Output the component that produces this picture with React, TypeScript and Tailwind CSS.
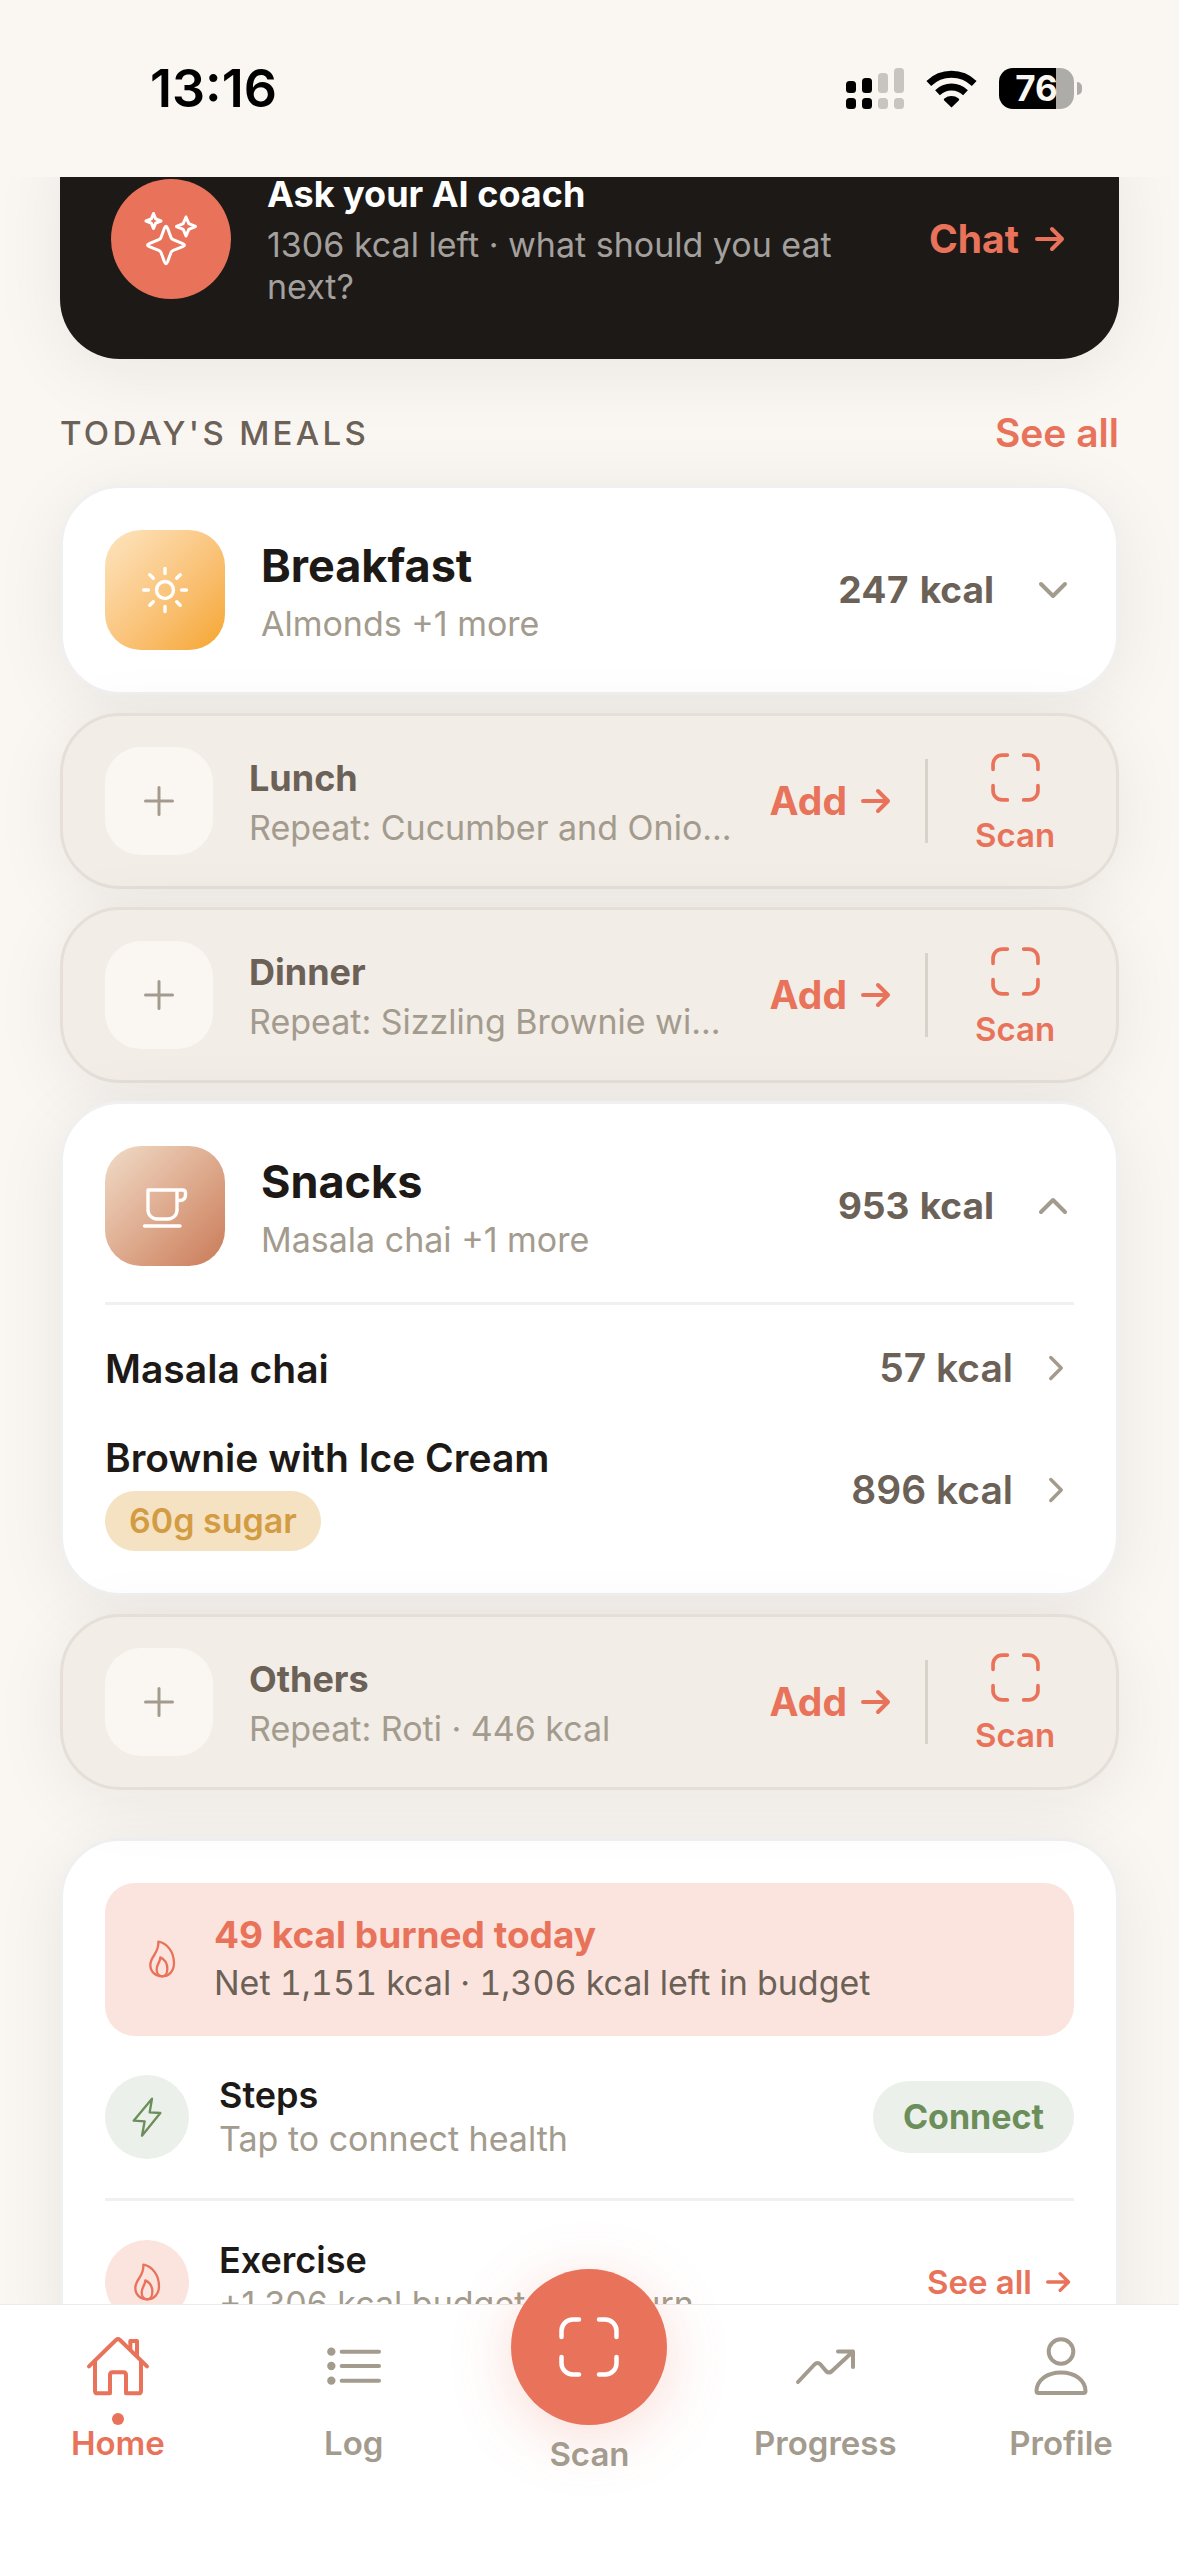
import type { ReactNode } from 'react';

type IconProps = { className?: string };

function Arrow({ className = '' }: IconProps) {
  return (
    <svg viewBox="0 0 30 26" className={className} fill="none" stroke="currentColor" strokeWidth="4" strokeLinecap="round" strokeLinejoin="round" aria-hidden="true">
      <path d="M2 13H27M17 3l10 10-10 10" />
    </svg>
  );
}

function Chevron({ className = '' }: IconProps) {
  return (
    <svg viewBox="0 0 30 30" className={className} fill="none" stroke="currentColor" strokeWidth="4" strokeLinecap="round" strokeLinejoin="round" aria-hidden="true">
      <path d="M3 9l12 12 12-12" />
    </svg>
  );
}

function ScanFrame({ className = '' }: IconProps) {
  return (
    <svg viewBox="0 0 48 48" className={className} fill="none" stroke="currentColor" strokeWidth="3.6" strokeLinecap="round" aria-hidden="true">
      <path d="M2 16V11a9 9 0 0 1 9-9h5M32 2h5a9 9 0 0 1 9 9v5M46 32v5a9 9 0 0 1-9 9h-5M16 46h-5a9 9 0 0 1-9-9v-5" />
    </svg>
  );
}

function Flame({ className = '' }: IconProps) {
  return (
    <svg viewBox="126 119 120 120" className={className} fill="none" stroke="currentColor" strokeWidth="7" strokeLinejoin="round" aria-hidden="true">
      <path d="M175 127C202 132 222 158 222 192C222 216 206 231 186 231C166 231 151 217 151 197C151 170 178 162 175 127Z" />
      <path d="M181 174C194 180 202 193 202 208C202 222 195 231 186 231C176 231 170 222 170 210C170 195 180 190 181 174Z" />
    </svg>
  );
}

function Bolt({ className = '' }: IconProps) {
  return (
    <svg viewBox="81 592 120 120" className={className} fill="none" stroke="currentColor" strokeWidth="7" strokeLinejoin="round" aria-hidden="true">
      <path d="M156 597L101 663L134 665L126 708L181 640L149 638Z" />
    </svg>
  );
}

function Sparkles({ className = '' }: IconProps) {
  return (
    <svg viewBox="0 0 60 60" className={className} fill="none" stroke="currentColor" strokeWidth="3" strokeLinejoin="round" aria-hidden="true">
      <path d="M23.5 19q1.5-3.500 3 0l3.500 9.500q.6 1.600 2.200 2.200l9.500 4q3.500 1.500 0 3l-9.500 3.600q-1.600.6-2.200 2.200l-3.500 9.500q-1.500 3.500-3 0l-3.500-9.500q-.6-1.600-2.200-2.200l-9.500-3.600q-3.500-1.500 0-3l9.500-4q1.600-.6 2.200-2.200z" />
      <path d="M12.500 4.500l2.200 5.300 5.300 2.200-5.300 2.200-2.200 5.300-2.200-5.300L5 12l5.300-2.200zM45 8l2.800 6.700 6.700 2.800-6.700 2.800L45 27l-2.800-6.700-6.700-2.800 6.700-2.800z" />
    </svg>
  );
}

function Sun({ className = '' }: IconProps) {
  return (
    <svg viewBox="0 0 60 60" className={className} fill="none" stroke="currentColor" strokeWidth="3.4" strokeLinecap="round" aria-hidden="true">
      <circle cx="30" cy="30" r="8.500" />
      <path d="M30 8.500v5M30 46.500v5M8.500 30h5M46.500 30h5M14.800 14.800l3.500 3.500M41.700 41.700l3.500 3.500M14.800 45.200l3.500-3.500M41.700 18.300l3.500-3.500" />
    </svg>
  );
}

function Cup({ className = '' }: IconProps) {
  return (
    <svg viewBox="0 0 60 60" className={className} fill="none" stroke="currentColor" strokeWidth="3.400" strokeLinecap="round" strokeLinejoin="round" aria-hidden="true">
      <path d="M13 14H42V34a9 9 0 0 1-9 9H22a9 9 0 0 1-9-9zM42 14h5.500q3 0 3 3v1.500q0 6-6 6H42M9.500 50H45" />
    </svg>
  );
}

function Plus({ className = '' }: IconProps) {
  return (
    <svg viewBox="0 0 30 30" className={className} fill="none" stroke="currentColor" strokeWidth="3" strokeLinecap="round" aria-hidden="true">
      <path d="M15 1.500v27M1.500 15h27" />
    </svg>
  );
}

function HomeIcon({ className = '' }: IconProps) {
  return (
    <svg viewBox="255 279 198 198" className={className} fill="none" stroke="currentColor" strokeWidth="12" strokeLinecap="round" strokeLinejoin="round" aria-hidden="true">
      <path d="M267 379L348 300q6-5 12 0L441 379" />
      <path d="M285 364V452q0 8 8 8H330V405q0-8 8-8H370q8 0 8 8V460H415q8 0 8-8V364" />
      <path d="M391 326V303H411V346" />
    </svg>
  );
}

function ListIcon({ className = '' }: IconProps) {
  return (
    <svg viewBox="963 279 198 198" className={className} stroke="currentColor" strokeWidth="12" strokeLinecap="round" aria-hidden="true">
      <path d="M1025 335H1137M1025 378H1137M1025 422H1137" />
      <g fill="currentColor" stroke="none">
        <circle cx="994" cy="335" r="12.500" />
        <circle cx="994" cy="378" r="12.500" />
        <circle cx="994" cy="422" r="12.500" />
      </g>
    </svg>
  );
}

function TrendIcon({ className = '' }: IconProps) {
  return (
    <svg viewBox="0 0 66 66" className={className} fill="none" stroke="currentColor" strokeWidth="4" strokeLinecap="round" strokeLinejoin="round" aria-hidden="true">
      <path d="M6 49L22.500 31.500q3-3 6 0L34 38q3 3 6 0L61 18.500M46 18.500H61V34" />
    </svg>
  );
}

function PersonIcon({ className = '' }: IconProps) {
  return (
    <svg viewBox="0 0 66 66" className={className} fill="none" stroke="currentColor" strokeWidth="4" strokeLinejoin="round" aria-hidden="true">
      <circle cx="33" cy="18.500" r="12.300" />
      <path d="M10.500 60a2 2 0 0 1-2-2C9 47 19 39.500 33 39.500S57 47 57.500 58a2 2 0 0 1-2 2z" />
    </svg>
  );
}

function StatusBar() {
  return (
    <header className="relative z-10 flex h-[177px] shrink-0 items-center justify-between bg-[#faf7f2] pr-[97px] pl-[150px] text-black">
      <time className="text-[52px] leading-none font-semibold">13:16</time>
      <div className="flex items-center gap-[22px]">
        <svg viewBox="0 0 58 42" className="h-[42px] w-[58px]" role="img" aria-label="Signal">
          <g fill="#000">
            <rect x="0" y="13" width="10" height="12" rx="3.500" />
            <rect x="16" y="10" width="10" height="15" rx="3.500" />
            <rect x="0" y="30" width="10" height="11" rx="3.500" />
            <rect x="16" y="30" width="10" height="11" rx="3.500" />
          </g>
          <g fill="#c8c5c0">
            <rect x="32" y="5" width="10" height="20" rx="3.500" />
            <rect x="48" y="0" width="10" height="25" rx="3.500" />
            <rect x="32" y="30" width="10" height="11" rx="3.500" />
            <rect x="48" y="30" width="10" height="11" rx="3.500" />
          </g>
        </svg>
        <svg viewBox="0 0 51 38" className="h-[38px] w-[51px]" role="img" aria-label="Wi-Fi">
          <path d="M25.500 37.500L18 30.200q-.6-1 .4-1.700a11.500 11.500 0 0 1 14.200 0q1 .7.400 1.700z" fill="#000" />
          <path d="M11.500 22.700a20 20 0 0 1 28 0M2.800 13.500a32.500 32.500 0 0 1 45.400 0" fill="none" stroke="#000" strokeWidth="6.800" />
        </svg>
        <div className="flex items-center gap-[3px]">
          <div className="flex h-[41px] w-[75px] items-center justify-center rounded-[14px] bg-[linear-gradient(to_right,#000_76%,#adaca9_76%)] text-[35px] leading-none font-bold text-[#faf7f2]">
            76
          </div>
          <div className="h-[13px] w-[5px] rounded-r-full bg-[#adaca9]" />
        </div>
      </div>
    </header>
  );
}

const SHADOW = 'shadow-[0_12px_72px_rgba(28,25,23,0.07)]';

function Card({ children, className = '' }: { children: ReactNode; className?: string }) {
  return (
    <section className={`rounded-[60px] border-[3px] border-[#f0f0f0] bg-white p-[42px] ${SHADOW} ${className}`}>{children}</section>
  );
}

function CoachCard() {
  return (
    <section className={`-mt-[58px] flex h-[240px] items-center rounded-[60px] bg-[#1d1917] pr-[54px] pl-[51px] ${SHADOW}`}>
      <div className="flex size-[120px] shrink-0 items-center justify-center rounded-full bg-[#e8735a] text-white">
        <Sparkles className="size-[60px]" />
      </div>
      <div className="ml-9 flex-1">
        <h2 className="text-[36px] leading-[48px] font-bold text-white">Ask your AI coach</h2>
        <p className="mt-[6px] pr-12 text-[34px] leading-[42px] text-[#a3a09d]">1306 kcal left · what should you eat next?</p>
      </div>
      <button type="button" className="flex items-center gap-4 text-[39px] leading-[48px] font-bold text-[#e8735a]">
        Chat
        <Arrow className="h-[26px] w-[30px]" />
      </button>
    </section>
  );
}

type MealHeaderProps = {
  name: string;
  summary: string;
  kcal: string;
  open?: boolean;
  tile: string;
  icon: ReactNode;
};

function MealHeader({ name, summary, kcal, open = false, tile, icon }: MealHeaderProps) {
  return (
    <button type="button" aria-expanded={open} className="flex w-full items-center text-left">
      <span className={`flex size-[120px] shrink-0 items-center justify-center rounded-[36px] text-white ${tile}`}>{icon}</span>
      <span className="ml-9 flex flex-1 flex-col gap-[10px] pt-1">
        <span className="text-[45px] leading-[54px] font-bold text-[#1d1917]">{name}</span>
        <span className="text-[34px] leading-[42px] text-[#a39b8d]">{summary}</span>
      </span>
      <span className="text-[37px] font-bold text-[#6b6157] tabular-nums">{kcal}</span>
      <Chevron className={open ? 'mr-[6px] ml-[44px] size-[30px] rotate-180 text-[#a39b8d]' : 'mr-[6px] ml-[44px] size-[30px] text-[#a39b8d]'} />
    </button>
  );
}

function EmptyMeal({ name, hint }: { name: string; hint: string }) {
  return (
    <section className={`flex h-[176px] items-center rounded-[60px] border-[3px] border-[#e5dfd8] bg-[#f2ede7] px-[42px] ${SHADOW}`}>
      <div className="flex size-[108px] shrink-0 items-center justify-center rounded-[36px] bg-[#faf7f2] text-[#a39b8d]">
        <Plus className="size-[30px]" />
      </div>
      <div className="ml-9 min-w-0 flex-1 pt-1">
        <h3 className="text-[36px] leading-[48px] font-bold text-[#6b6157]">{name}</h3>
        <p className="mt-[2px] text-[34px] leading-[48px] whitespace-nowrap text-[#a39b8d]">{hint}</p>
      </div>
      <button type="button" className="ml-6 flex shrink-0 items-center gap-[14px] text-[39px] leading-[48px] font-bold text-[#e8735a]">
        Add
        <Arrow className="h-[26px] w-[30px]" />
      </button>
      <div className="ml-[34px] h-[84px] w-[3px] shrink-0 bg-[#d8d2cb]" />
      <button type="button" className="ml-7 flex w-[118px] shrink-0 flex-col items-center gap-3 pt-[6px] text-[33px] leading-[42px] font-semibold text-[#e8735a]">
        <ScanFrame className="size-[49px]" />
        Scan
      </button>
    </section>
  );
}

function FoodRow({ name, kcal, tag }: { name: string; kcal: string; tag?: string }) {
  return (
    <li>
      <button type="button" className="flex w-full items-center text-left">
        <span className="flex flex-1 flex-col items-start gap-[6px]">
          <span className="text-[39px] leading-[55px] font-semibold text-[#1d1917]">{name}</span>
          {tag && (
            <span className="rounded-[30px] bg-[#f5e2c3] px-6 text-[34px] leading-[60px] font-semibold text-[#d39c42]">{tag}</span>
          )}
        </span>
        <span className="text-[39px] font-semibold text-[#6b6157]">{kcal}</span>
        <Chevron className="mr-[5px] ml-[30px] size-[26px] -rotate-90 text-[#a39b8d]" />
      </button>
    </li>
  );
}

type ActivityRowProps = { icon: ReactNode; tint: string; title: string; detail: string; action: ReactNode };

function ActivityRow({ icon, tint, title, detail, action }: ActivityRowProps) {
  return (
    <div className="flex items-center">
      <div className={`flex size-[84px] shrink-0 items-center justify-center rounded-full ${tint}`}>{icon}</div>
      <div className="-my-0.5 ml-[30px] flex-1">
        <h3 className="text-[36px] leading-[44px] font-semibold text-[#1d1917]">{title}</h3>
        <p className="text-[34px] leading-[44px] text-[#a39b8d]">{detail}</p>
      </div>
      {action}
    </div>
  );
}

function NavItem({ label, icon, active = false }: { label: string; icon: ReactNode; active?: boolean }) {
  return (
    <a
      href="#"
      aria-current={active ? 'page' : undefined}
      className={
        active
          ? 'flex flex-1 flex-col items-center pt-7 text-[#e8735a]'
          : 'flex flex-1 flex-col items-center pt-7 text-[#a39b8d]'
      }
    >
      {icon}
      <span className={active ? 'mt-[14px] size-3 rounded-full bg-[#e8735a]' : 'mt-[14px] size-3'} />
      <span className="text-[33px] leading-[36px] font-semibold">{label}</span>
    </a>
  );
}

function BottomNav() {
  return (
    <nav className="relative z-10 flex h-[252px] shrink-0 border-t border-[#ececec] bg-white">
      <NavItem label="Home" icon={<HomeIcon className="size-[66px]" />} active />
      <NavItem label="Log" icon={<ListIcon className="size-[66px]" />} />
      <a href="#" className="-mt-9 flex flex-1 flex-col items-center text-[#a39b8d]">
        <span className="flex size-[156px] items-center justify-center rounded-full bg-[#e8735a] text-white shadow-[0_12px_60px_rgba(232,115,90,0.25)]">
          <ScanFrame className="size-[60px]" />
        </span>
        <span className="mt-[11px] text-[33px] leading-[36px] font-semibold">Scan</span>
      </a>
      <NavItem label="Progress" icon={<TrendIcon className="size-[66px]" />} />
      <NavItem label="Profile" icon={<PersonIcon className="size-[66px]" />} />
    </nav>
  );
}

export default function App() {
  return (
    <div className="flex h-screen flex-col overflow-hidden bg-[#faf7f2] font-[Inter,sans-serif]">
      <StatusBar />
      <main className="min-h-0 flex-1 overflow-hidden px-[60px]">
        <CoachCard />

        <div className="mt-[50px] flex items-center justify-between">
          <h2 className="text-[33px] leading-[48px] font-medium tracking-widest text-[#6b6157]">TODAY'S MEALS</h2>
          <a href="#" className="text-[39px] leading-[48px] font-semibold text-[#e8735a]">
            See all
          </a>
        </div>

        <div className="mt-7 flex flex-col gap-[18px]">
          <Card>
            <MealHeader
              name="Breakfast"
              summary="Almonds +1 more"
              kcal="247 kcal"
              tile="bg-linear-to-br from-[#fde5c0] to-[#f5a524]"
              icon={<Sun className="size-[60px]" />}
            />
          </Card>
          <EmptyMeal name="Lunch" hint="Repeat: Cucumber and Onio..." />
          <EmptyMeal name="Dinner" hint="Repeat: Sizzling Brownie wi..." />
          <Card>
            <MealHeader
              name="Snacks"
              summary="Masala chai +1 more"
              kcal="953 kcal"
              open
              tile="bg-linear-to-br from-[#f0dcc8] to-[#c97b57]"
              icon={<Cup className="size-[60px]" />}
            />
            <ul className="mt-9 flex flex-col gap-8 border-t-[3px] border-[#f0f0f0] pt-[34px]">
              <FoodRow name="Masala chai" kcal="57 kcal" />
              <FoodRow name="Brownie with Ice Cream" kcal="896 kcal" tag="60g sugar" />
            </ul>
          </Card>
          <EmptyMeal name="Others" hint="Repeat: Roti · 446 kcal" />
        </div>

        <Card className="mt-12">
          <div className="flex h-[153px] items-center rounded-[30px] bg-[#fce4de] px-[37px]">
            <Flame className="size-[40px] text-[#e8735a]" />
            <div className="ml-8">
              <h3 className="text-[37px] leading-[48px] font-bold text-[#e8735a]">49 kcal burned today</h3>
              <p className="text-[34px] leading-[48px] text-[#6b6157] tabular-nums">Net 1,151 kcal · 1,306 kcal left in budget</p>
            </div>
          </div>
          <div className="mt-[39px]">
            <ActivityRow
              icon={<Bolt className="size-[40px] text-[#6b8e5a]" />}
              tint="bg-[#ebf0ea]"
              title="Steps"
              detail="Tap to connect health"
              action={
                <button type="button" className="h-[72px] rounded-[36px] bg-[#ebf0ea] px-[30px] text-[34px] font-bold text-[#6b8e5a]">
                  Connect
                </button>
              }
            />
          </div>
          <div className="mt-[39px] border-t-[3px] border-[#f0f0f0] pt-[39px]">
            <ActivityRow
              icon={<Flame className="size-[40px] text-[#e8735a]" />}
              tint="bg-[#fce4de]"
              title="Exercise"
              detail="+1,306 kcal budget from burn"
              action={
                <a href="#" className="mr-[3px] flex items-center gap-[14px] text-[33px] leading-[42px] font-semibold text-[#e8735a]">
                  See all
                  <Arrow className="h-[22px] w-[25px]" />
                </a>
              }
            />
          </div>
        </Card>
      </main>
      <BottomNav />
    </div>
  );
}
